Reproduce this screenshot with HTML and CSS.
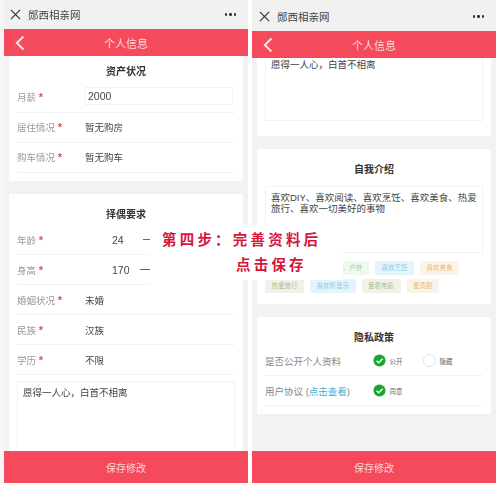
FILE: index.html
```html
<!DOCTYPE html>
<html lang="zh">
<head>
    <meta charset="UTF-8">
    <meta name="viewport" content="width=device-width, initial-scale=1.0">
    <title>个人信息</title>
    <link rel="stylesheet" href="styles.css">
</head>
<body>
  <div class="page">
    <!-- left phone -->
    <div class="phone phone-left">
        <div class="titlebar">
            <svg class="close-icon" viewBox="0 0 12 12"><path d="M1 1L11 11M11 1L1 11"/></svg>
            <span class="site-name">郧西相亲网</span>
            <span class="dots"><i></i><i></i><i></i></span>
        </div>
        <div class="header">
            <svg class="back-icon" viewBox="0 0 10 16"><path d="M8.5 1.5L1.8 8L8.5 14.5"/></svg>
            <span>个人信息</span>
        </div>
        <div class="content">
            <div class="card card-assets">
                <h3>资产状况</h3>
                <div class="row">
                    <span class="label">月薪 <b>*</b></span>
                    <span class="input-box">2000</span>
                </div>
                <div class="row">
                    <span class="label">居住情况 <b>*</b></span>
                    <span class="value">暂无购房</span>
                </div>
                <div class="row">
                    <span class="label">购车情况 <b>*</b></span>
                    <span class="value">暂无购车</span>
                </div>
            </div>
            <div class="card card-spouse">
                <h3>择偶要求</h3>
                <div class="row row-short">
                    <span class="label">年龄 <b>*</b></span>
                    <span class="num">24</span><span class="dash dash-short"></span>
                </div>
                <div class="row row-short">
                    <span class="label">身高 <b>*</b></span>
                    <span class="num">170</span><span class="dash"></span>
                </div>
                <div class="row">
                    <span class="label">婚姻状况 <b>*</b></span>
                    <span class="value">未婚</span>
                </div>
                <div class="row">
                    <span class="label">民族 <b>*</b></span>
                    <span class="value">汉族</span>
                </div>
                <div class="row">
                    <span class="label">学历 <b>*</b></span>
                    <span class="value">不限</span>
                </div>
                <div class="textbox textbox-spouse">愿得一人心，白首不相离</div>
            </div>
        </div>
        <div class="save-btn">保存修改</div>
    </div>

    <!-- right phone -->
    <div class="phone phone-right">
        <div class="titlebar">
            <svg class="close-icon" viewBox="0 0 12 12"><path d="M1 1L11 11M11 1L1 11"/></svg>
            <span class="site-name">郧西相亲网</span>
            <span class="dots"><i></i><i></i><i></i></span>
        </div>
        <div class="header">
            <svg class="back-icon" viewBox="0 0 10 16"><path d="M8.5 1.5L1.8 8L8.5 14.5"/></svg>
            <span>个人信息</span>
        </div>
        <div class="content">
            <div class="card card-rest">
                <div class="textbox textbox-rest">愿得一人心，白首不相离</div>
            </div>
            <div class="card card-intro">
                <h3>自我介绍</h3>
                <div class="textbox textbox-intro">喜欢DIY、喜欢阅读、喜欢烹饪、喜欢美食、热爱旅行、喜欢一切美好的事物</div>
                <div class="tags">
                    <span class="tag tag-green tag-first">喜欢DIY、户外</span>
                    <span class="tag tag-blue">喜欢烹饪</span>
                    <span class="tag tag-orange">喜欢美食</span>
                    <span class="tag tag-olive">热爱旅行</span>
                    <span class="tag tag-blue">喜欢听音乐</span>
                    <span class="tag tag-olive">爱看电影</span>
                    <span class="tag tag-orange">爱烫剧</span>
                </div>
            </div>
            <div class="card card-privacy">
                <h3>隐私政策</h3>
                <div class="row">
                    <span class="label label-wide">是否公开个人资料</span>
                    <span class="radio">
                        <svg class="check" viewBox="0 0 14 14"><circle cx="7" cy="7" r="6.5"/><path d="M3.8 7.2L6.2 9.4L10.3 5.2"/></svg>
                        公开
                    </span>
                    <span class="radio"><i class="empty"></i>隐藏</span>
                </div>
                <div class="row">
                    <span class="label label-wide">用户协议 (<a>点击查看</a>)</span>
                    <span class="radio">
                        <svg class="check" viewBox="0 0 14 14"><circle cx="7" cy="7" r="6.5"/><path d="M3.8 7.2L6.2 9.4L10.3 5.2"/></svg>
                        同意
                    </span>
                </div>
            </div>
        </div>
        <div class="save-btn">保存修改</div>
    </div>

    <!-- caption laid over both phones -->
    <div class="banner">
        <p class="banner-one">第四步：完善资料后</p>
        <p class="banner-two">点击保存</p>
    </div>
  </div>
</body>
</html>
```

FILE: styles.css
```css
* {
    box-sizing: border-box;
}
html, body {
    margin: 0;
    padding: 0;
    background-color: white;
}
body {
    font-family: "Liberation Sans", "Noto Sans CJK SC", sans-serif;
    color: #444;
}
.page {
    position: relative;
    width: 499px;
    height: 486px;
    overflow: hidden;
    display: flex;
    gap: 4px;
    padding: 0 3px 3px 4px;
    filter: blur(0.5px);
}
.phone {
    width: 244px;
    display: flex;
    flex-direction: column;
    background-color: #f2f2f2;
}
.phone-left {
    box-shadow: -4px 0 0 #f6f6f6;
}
.titlebar {
    height: 29px;
    flex-shrink: 0;
    display: flex;
    align-items: center;
    padding: 0 12px 0 6px;
    background-color: #f1f1f1;
}
.phone-right .titlebar {
    height: 31px;
    padding-top: 2px;
    padding-left: 7px;
}
.close-icon {
    width: 11px;
    height: 11px;
    fill: none;
    stroke: #333;
    stroke-width: 1.3;
}
.site-name {
    margin-left: 7px;
    font-size: 10.5px;
    color: #444;
}
.dots {
    margin-left: auto;
    display: flex;
    gap: 2px;
}
.dots i {
    width: 2.5px;
    height: 2.5px;
    border-radius: 50%;
    background-color: #333;
}
.header {
    height: 27px;
    flex-shrink: 0;
    display: flex;
    align-items: center;
    justify-content: center;
    position: relative;
    background-color: #f44a5c;
    color: #fbd5d8;
    font-size: 11px;
}
.back-icon {
    position: absolute;
    left: 11px;
    top: 6px;
    width: 10px;
    height: 16px;
    fill: none;
    stroke: #fbe3e5;
    stroke-width: 2;
}
.content {
    flex: 1;
    min-height: 0;
    overflow: hidden;
    padding: 0 5px;
}
.card {
    background-color: white;
    border-radius: 2px;
    padding: 0 8px;
    margin-bottom: 13px;
}
.card h3 {
    margin: 0 0 3px;
    font-size: 10px;
    line-height: 16px;
    font-weight: bold;
    color: #333;
    text-align: center;
}
.card-assets {
    height: 125px;
    padding-top: 8px;
}
.card-assets .row {
    padding-bottom: 2px;
}
.card-spouse {
    height: 300px;
    padding-top: 13px;
}
.card-spouse h3 {
    margin-bottom: 2px;
}
.row {
    height: 30px;
    display: flex;
    align-items: center;
    border-bottom: 1px solid #f3f3f3;
    font-size: 9.5px;
}
.label {
    width: 68px;
    flex-shrink: 0;
    color: #999;
}
.label b {
    color: #d9534f;
    font-size: 11px;
    line-height: 9px;
}
.value {
    color: #444;
}
.input-box {
    width: 149px;
    height: 18px;
    margin: 0 0 2px -1px;
    border: 1px solid #f3f3f3;
    padding-left: 3px;
    line-height: 16px;
    font-size: 10.5px;
    color: #444;
}
.row-short {
    width: 133px;
}
.num {
    width: 28px;
    margin-left: 27px;
    color: #444;
    font-size: 10.5px;
}
.dash {
    width: 10px;
    height: 1px;
    background-color: #666;
}
.dash-short {
    width: 7px;
    margin-left: 3px;
}
.textbox {
    border: 1px solid #f3f3f3;
    padding: 5px;
    font-size: 9.5px;
    line-height: 11px;
    color: #444;
}
.textbox-spouse {
    height: 90px;
    margin-top: 6px;
}
.card-rest {
    height: 78px;
}
.textbox-rest {
    height: 63px;
    border-top: none;
    padding-top: 1px;
}
.card-intro {
    height: 155px;
    padding-top: 13px;
}
.card-intro h3 {
    margin-bottom: 8px;
}
.textbox-intro {
    height: 67px;
}
.tags {
    display: flex;
    flex-wrap: wrap;
    gap: 4px 6px;
    margin-top: 8px;
}
.tag {
    height: 14px;
    line-height: 14px;
    padding: 0 6.5px;
    font-size: 6.5px;
    border-radius: 2px;
}
.tag-first {
    width: 104px;
    text-align: right;
}
.tag-green {
    background-color: #eefaee;
    color: #9ccb9c;
}
.tag-blue {
    background-color: #e3f5fc;
    color: #93c6dc;
}
.tag-orange {
    background-color: #fbf3ea;
    color: #e6bd7a;
}
.tag-olive {
    background-color: #eff2e8;
    color: #a9bf8c;
}
.card-privacy {
    height: 97px;
    padding-top: 13px;
}
.card-privacy h3 {
    margin-bottom: 0;
}
.label-wide {
    width: 108px;
    color: #888;
}
.label-wide a {
    color: #46aecb;
}
.radio {
    display: flex;
    align-items: center;
    gap: 3.5px;
    width: 50px;
    font-size: 6.5px;
    color: #666;
}
.check {
    width: 13px;
    height: 13px;
}
.check circle {
    fill: #13a92d;
}
.check path {
    fill: none;
    stroke: white;
    stroke-width: 1.6;
}
.empty {
    width: 13px;
    height: 13px;
    border: 1px solid #e2e2e2;
    border-radius: 50%;
}
.save-btn {
    height: 32px;
    flex-shrink: 0;
    display: flex;
    align-items: center;
    justify-content: center;
    background-color: #f44a5c;
    color: #fbd5d8;
    font-size: 10px;
}
.banner {
    position: absolute;
    left: 150px;
    top: 225px;
    width: 193px;
    height: 55px;
    background-color: white;
    color: #d8153a;
    font-size: 14.5px;
    font-weight: bold;
    letter-spacing: 3.2px;
}
.banner p {
    margin: 0;
    line-height: 20px;
    white-space: nowrap;
}
.banner-one {
    padding: 5px 0 0 12px;
}
.banner-two {
    padding: 5px 0 0 86px;
}
```
